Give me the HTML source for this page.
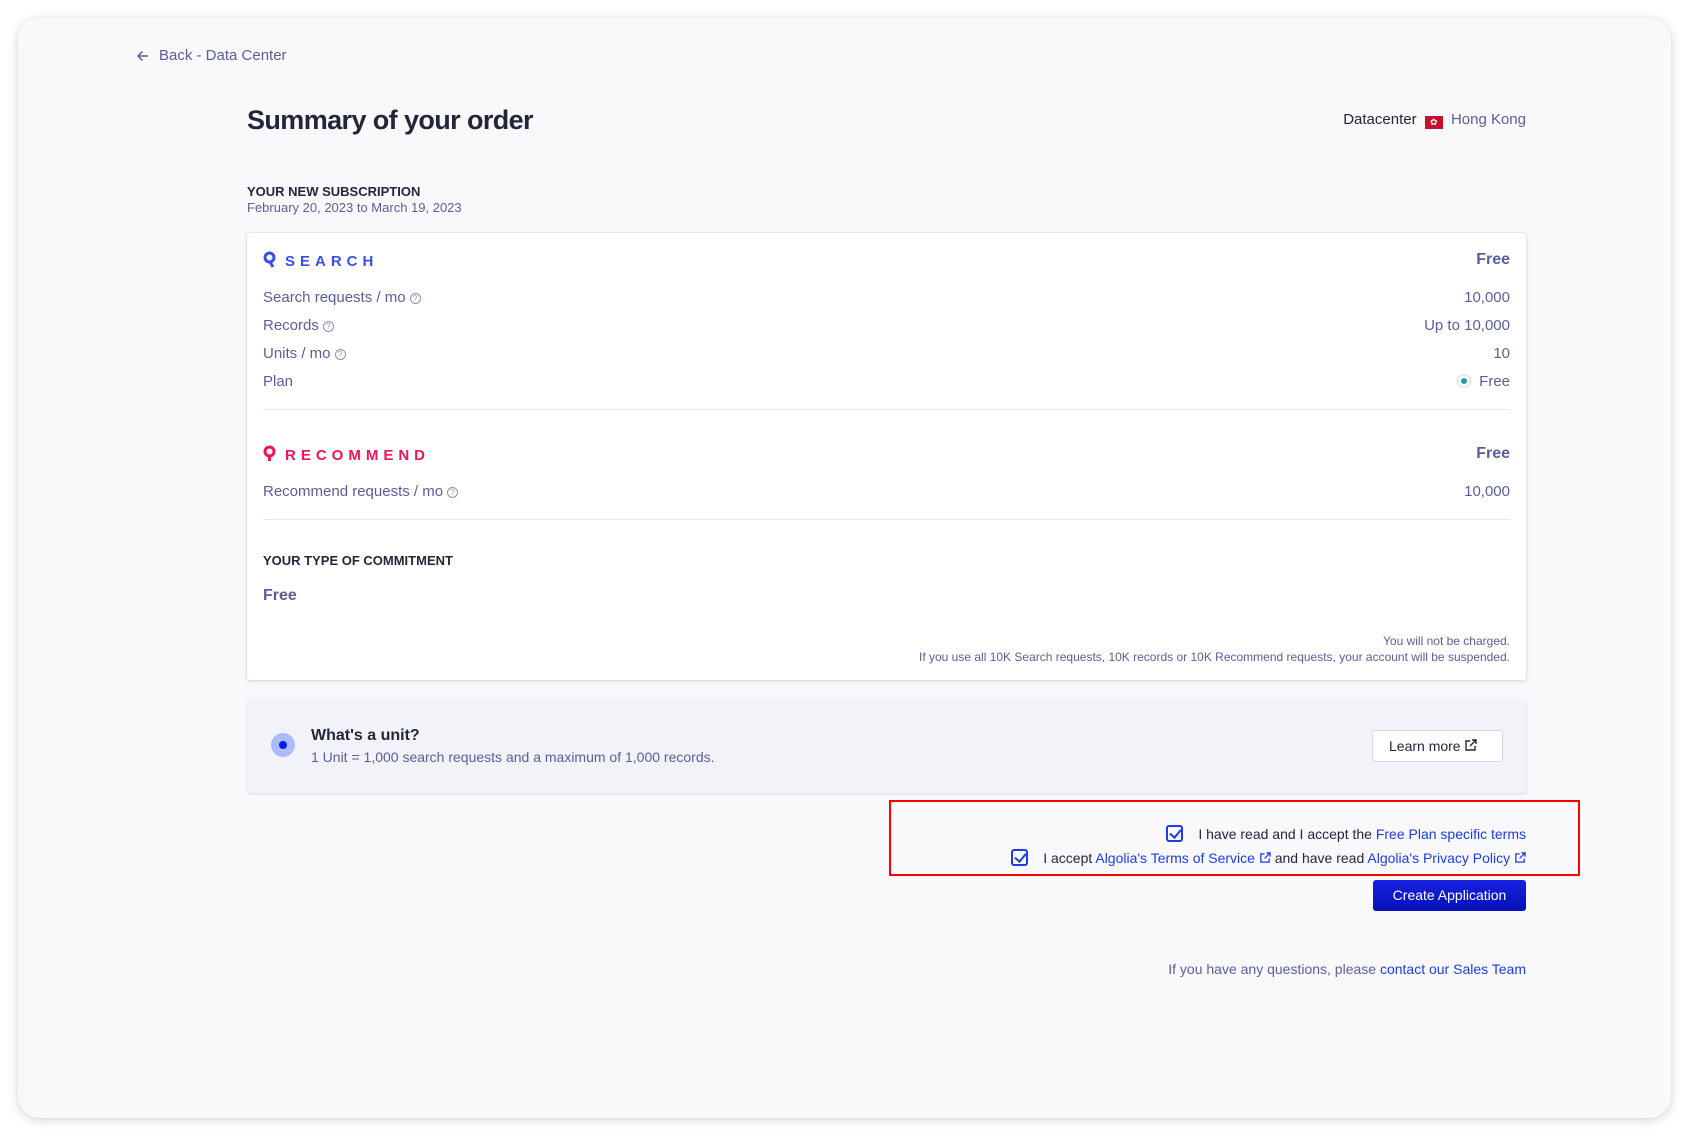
<!DOCTYPE html>
<html><head><meta charset="utf-8"><style>
*{box-sizing:border-box;margin:0;padding:0}
body{width:1689px;height:1136px;background:#fff;font-family:"Liberation Sans",sans-serif;color:#5a5e9a;position:relative;overflow:hidden}
.frame{position:absolute;left:18px;top:18px;width:1653px;height:1100px;background:#f9f9fc;border-radius:22px;box-shadow:0 2px 10px rgba(0,0,0,.18)}
.a{position:absolute;white-space:nowrap}
.card{position:absolute;left:247px;top:233px;width:1279px;height:447px;background:#fff;border-radius:3px;box-shadow:0 1px 4px rgba(35,38,59,.15),0 0 0 1px rgba(35,38,59,.04)}
.row{position:absolute;left:16px;right:16px;font-size:15px;line-height:18px}
.row .r{position:absolute;right:0;top:0}
.q{display:inline-block;width:11px;height:11px;border:1px solid #8b8fb5;border-radius:50%;font-size:8px;line-height:9px;text-align:center;color:#8b8fb5;vertical-align:1px;margin-left:4px}
.hr{position:absolute;left:16px;right:16px;height:1px;background:#e8e9f0}
.lk{color:#1b3ce8}
.cb{display:inline-block;width:17px;height:17px;border:2px solid #1b3ce8;border-radius:3px;vertical-align:-3px;position:relative}
.cb:after{content:"";position:absolute;left:4px;top:0px;width:5px;height:9px;border:solid #1b3ce8;border-width:0 2px 2px 0;transform:rotate(40deg)}
.ext{display:inline-block;vertical-align:-1px}
</style></head><body>
<div class="frame"></div>
<svg class="a" style="left:136px;top:49px" width="14" height="14" viewBox="0 0 14 14"><path d="M12 7H2M6.5 2.5L2 7l4.5 4.5" fill="none" stroke="#5a5e9a" stroke-width="1.5"/></svg>
<div class="a" style="left:159px;top:47px;font-size:15px">Back - Data Center</div>
<div class="a" style="left:247px;top:105px;font-size:27px;font-weight:600;color:#23263b;letter-spacing:-.6px">Summary of your order</div>
<div class="a" style="right:163px;top:111px;font-size:15px;color:#23263b">Datacenter <span style="display:inline-block;width:18px;height:13px;background:#c8102e;vertical-align:-1px;margin:0 4px;color:#fff;font-size:9px;text-align:center;line-height:13px">✿</span> <span style="color:#5a5e9a">Hong Kong</span></div>
<div class="a" style="left:247px;top:184px;font-size:13px;font-weight:700;color:#23263b">YOUR NEW SUBSCRIPTION</div>
<div class="a" style="left:247px;top:200px;font-size:13px">February 20, 2023 to March 19, 2023</div>
<div class="card">
 <div class="row" style="top:18px;color:#3a4fe8;font-weight:700;font-size:15px;letter-spacing:5px"><svg width="14" height="17" viewBox="0 0 14 17" style="vertical-align:-2px;margin-right:8px"><circle cx="6.5" cy="6.5" r="4.5" fill="none" stroke="#3a4fe8" stroke-width="3"/><path d="M7 11l3 5" stroke="#3a4fe8" stroke-width="3"/></svg>SEARCH<span class="r" style="color:#5a5e9a;letter-spacing:0;font-size:16px">Free</span></div>
 <div class="row" style="top:56px">Search requests / mo<span class="q">?</span><span class="r">10,000</span></div>
 <div class="row" style="top:84px">Records<span class="q">?</span><span class="r">Up to 10,000</span></div>
 <div class="row" style="top:112px">Units / mo<span class="q">?</span><span class="r">10</span></div>
 <div class="row" style="top:140px">Plan<span class="r"><span style="display:inline-block;width:14px;height:14px;border:1px solid #d6d7e6;border-radius:50%;vertical-align:-2px;margin-right:8px;position:relative"><span style="position:absolute;left:3px;top:3px;width:6px;height:6px;border-radius:50%;background:#1aa3ad"></span></span>Free</span></div>
 <div class="hr" style="top:176px"></div>
 <div class="row" style="top:212px;color:#f0145a;font-weight:700;font-size:15px;letter-spacing:5px"><svg width="14" height="17" viewBox="0 0 14 17" style="vertical-align:-2px;margin-right:8px"><circle cx="6.5" cy="6.5" r="4.5" fill="none" stroke="#f0145a" stroke-width="3"/><path d="M6.5 11v5" stroke="#f0145a" stroke-width="3"/></svg>RECOMMEND<span class="r" style="color:#5a5e9a;letter-spacing:0;font-size:16px">Free</span></div>
 <div class="row" style="top:250px">Recommend requests / mo<span class="q">?</span><span class="r">10,000</span></div>
 <div class="hr" style="top:286px"></div>
 <div class="row" style="top:319px;font-size:13px;font-weight:700;color:#23263b">YOUR TYPE OF COMMITMENT</div>
 <div class="row" style="top:354px;font-size:16px;font-weight:700">Free</div>
 <div class="row" style="top:400px;font-size:12px;text-align:right;line-height:16px">You will not be charged.<br>If you use all 10K Search requests, 10K records or 10K Recommend requests, your account will be suspended.</div>
</div>
<div class="a" style="left:247px;top:700px;width:1280px;height:93px;background:#f2f3f8;border-radius:3px;box-shadow:0 1px 2px rgba(35,38,59,.15)">
 <div class="a" style="left:24px;top:33px;width:24px;height:24px;border-radius:50%;background:#a8bcff"><div style="position:absolute;left:8px;top:8px;width:8px;height:8px;border-radius:50%;background:#0a1ae6"></div></div>
 <div class="a" style="left:64px;top:27px;font-size:16px;font-weight:700;color:#23263b">What's a unit?</div>
 <div class="a" style="left:64px;top:49px;font-size:14px">1 Unit = 1,000 search requests and a maximum of 1,000 records.</div>
 <div class="a" style="left:1125px;top:30px;width:131px;height:32px;background:#fff;border:1px solid #d6d7e6;border-radius:3px;font-size:14px;color:#23263b;line-height:30px;padding-left:16px">Learn more <svg class="ext" width="13" height="13" viewBox="0 0 13 13"><path d="M6 2H2v9h9V7M8 1h4v4M12 1L6 7" fill="none" stroke="#23263b" stroke-width="1.4"/></svg></div>
</div>
<div class="a" style="left:889px;top:800px;width:691px;height:76px;border:2px solid #f00"></div>
<div class="a" style="right:163px;top:825px;font-size:14px;color:#23263b"><span class="cb"></span>&nbsp;&nbsp;&nbsp; I have read and I accept the <span class="lk">Free Plan specific terms</span></div>
<div class="a" style="right:163px;top:849px;font-size:14px;color:#23263b"><span class="cb"></span>&nbsp;&nbsp;&nbsp; I accept <span class="lk">Algolia's Terms of Service <svg class="ext" width="12" height="12" viewBox="0 0 13 13"><path d="M6 2H2v9h9V7M8 1h4v4M12 1L6 7" fill="none" stroke="#1b3ce8" stroke-width="1.4"/></svg></span> and have read <span class="lk">Algolia's Privacy Policy <svg class="ext" width="12" height="12" viewBox="0 0 13 13"><path d="M6 2H2v9h9V7M8 1h4v4M12 1L6 7" fill="none" stroke="#1b3ce8" stroke-width="1.4"/></svg></span></div>
<div class="a" style="left:1373px;top:880px;width:153px;height:31px;background:linear-gradient(#1622e0,#0510b8);border-radius:3px;color:#fff;font-size:14px;line-height:31px;text-align:center">Create Application</div>
<div class="a" style="right:163px;top:961px;font-size:14px">If you have any questions, please <span class="lk">contact our Sales Team</span></div>
</body></html>
